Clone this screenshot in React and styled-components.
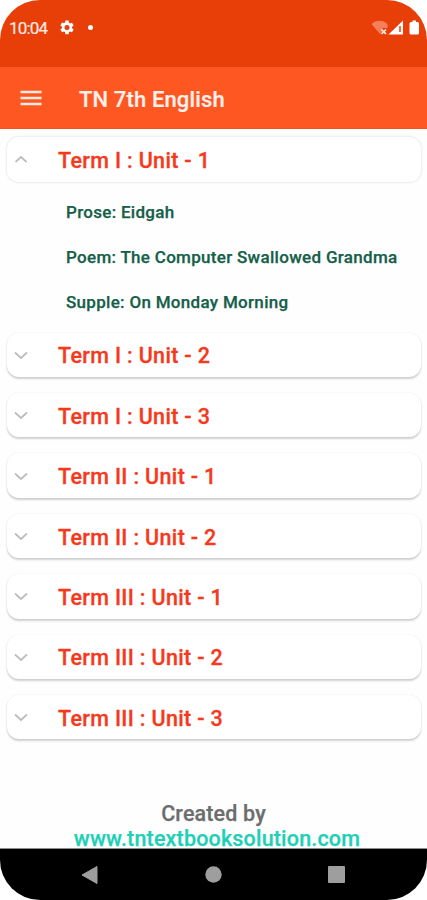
import React, { useState } from 'react';
import styled, { createGlobalStyle } from 'styled-components';

const GlobalStyle = createGlobalStyle`
  * { box-sizing: border-box; }
  body { margin: 0; background: #fff; }
`;

const Phone = styled.div`
  width: 427px;
  height: 900px;
  display: flex;
  flex-direction: column;
  overflow: hidden;
  border-radius: 40px;
  background: #fefefe;
  font-family: Roboto, sans-serif;
  font-weight: 500;
`;

const StatusBar = styled.header`
  height: 67px;
  flex: none;
  display: flex;
  align-items: flex-start;
  justify-content: space-between;
  padding: 17px 7px 0 9px;
  background: #e83e08;
  color: #ffeae2;
`;

const StatusGroup = styled.div`
  display: flex;
  align-items: center;
  height: 21px;
`;

const Clock = styled.span`
  width: 51px;
  padding-top: 2px;
  font-size: 17px;
  font-weight: 400;
  letter-spacing: -0.8px;
  line-height: 21px;
  -webkit-text-stroke: 0.2px;
`;

const Dot = styled.i`
  width: 5px;
  height: 5px;
  margin-left: 14px;
  border-radius: 50%;
  background: #fff;
`;

const AppBar = styled.div`
  height: 62px;
  flex: none;
  display: flex;
  align-items: center;
  padding: 0 20px;
  background: #ff5722;
  border-bottom: 1px solid #f4511e;
`;

const MenuButton = styled.button`
  display: flex;
  width: 22px;
  padding: 0;
  border: 0;
  background: none;
`;

const Title = styled.h1`
  margin: 5px 0 0 37px;
  font-size: 22px;
  font-weight: 500;
  line-height: 26px;
  letter-spacing: 0.13px;
  -webkit-text-stroke: 0.2px;
  color: #fff1eb;
`;

const List = styled.main`
  flex: 1;
  padding: 8.4px 6px 0 7px;
`;

const Section = styled.section`
  margin-bottom: 15.9px;
`;

const Card = styled.button`
  display: flex;
  align-items: center;
  width: 100%;
  height: 44.5px;
  padding: 0 0 0 7px;
  border: 0;
  border-radius: 12px;
  background: #fff;
  text-align: left;
  font: inherit;
  box-shadow: ${({ $open }) =>
    $open
      ? '0 0 2px 1px rgba(0, 0, 0, 0.08)'
      : '0 1.5px 2px rgba(0, 0, 0, 0.18), 0 0 2px rgba(0, 0, 0, 0.05)'};
`;

const CardLabel = styled.span`
  margin-left: 30px;
  padding-top: 2px;
  font-size: 21.5px;
  line-height: 25px;
  letter-spacing: 0.33px;
  -webkit-text-stroke: 0.3px;
  color: #f5391c;
`;

const Lessons = styled.ul`
  margin: 0 0 -15.9px;
  padding: 8.6px 0 7.1px 59px;
  list-style: none;
`;

const Lesson = styled.li`
  height: 45px;
  font-size: 17px;
  line-height: 45px;
  letter-spacing: 0.3px;
  -webkit-text-stroke: 0.25px;
  white-space: nowrap;
  color: #165f49;
`;

const Footer = styled.footer`
  flex: none;
  height: 49px;
  display: flex;
  flex-direction: column;
  align-items: center;
  padding-top: 1px;
  border-bottom: 1px solid #8b918f;
  white-space: nowrap;
`;

const Credit = styled.span`
  font-size: 21.5px;
  line-height: 25px;
  letter-spacing: 0.15px;
  -webkit-text-stroke: 0.25px;
  color: #6d6d6d;
`;

const SiteLink = styled.a`
  font-size: 21.5px;
  line-height: 25px;
  letter-spacing: 0.18px;
  margin-left: 7px;
  -webkit-text-stroke: 0.25px;
  color: #1fd0b7;
`;

const NavBar = styled.nav`
  flex: none;
  height: 51px;
  display: flex;
  justify-content: space-between;
  align-items: center;
  padding: 0 82px 0 80px;
  background: #000;
`;

const GearIcon = () => (
  <svg width="14" height="15" viewBox="2 2 20 20" fill="#fff">
    <path d="M19.14 12.94c.04-.3.06-.61.06-.94s-.02-.64-.07-.94l2.03-1.58a.5.5 0 0 0 .12-.61l-1.92-3.32a.49.49 0 0 0-.59-.22l-2.39.96c-.5-.38-1.03-.7-1.62-.94l-.36-2.54A.48.48 0 0 0 13.92 2h-3.84c-.24 0-.43.17-.47.41l-.36 2.54c-.59.24-1.13.57-1.62.94l-2.39-.96a.48.48 0 0 0-.59.22L2.74 8.87c-.12.21-.08.47.12.61l2.03 1.58c-.05.3-.09.63-.09.94s.02.64.07.94l-2.03 1.58a.5.5 0 0 0-.12.61l1.92 3.32c.12.22.37.29.59.22l2.39-.96c.5.38 1.03.7 1.62.94l.36 2.54c.05.24.24.41.48.41h3.84c.24 0 .44-.17.47-.41l.36-2.54c.59-.24 1.13-.56 1.62-.94l2.39.96c.22.08.47 0 .59-.22l1.92-3.32a.5.5 0 0 0-.12-.61zM12 15.6a3.6 3.6 0 1 1 0-7.2 3.6 3.6 0 0 1 0 7.2z" />
  </svg>
);

const SignalIcons = () => (
  <svg width="50" height="17" viewBox="0 0 50 17">
    <path d="M1.500 5C5 .5 14 .5 17.500 5v4h-5v3L10 15Z" fill="#f47f58" />
    <path d="M11.500 10.500 16 15M16 10.500 11.500 15" stroke="#fff0e9" strokeWidth="1.700" />
    <path d="M18.500 15.500 33 1.500v14Z" fill="#fff" />
    <path d="M30 7v6" stroke="#e83e08" strokeWidth="1.500" />
    <path d="M39.500 4.500q0-1.500 1.500-1.500h1.500V1.500h3.500V3H47.500q1.500 0 1.500 1.500v9.500q0 1.500-1.500 1.500h-6.500q-1.500 0-1.500-1.500Z" fill="#fff" />
  </svg>
);

const MenuIcon = () => (
  <svg width="22" height="16" viewBox="0 0 22 16">
    <path d="M.5 2h21M.5 8h21M.5 14h21" stroke="#ffebe3" strokeWidth="2.300" />
  </svg>
);

const Chevron = ({ up }) => (
  <svg width="14" height="10" viewBox="0 0 14 10" fill="none" stroke="#bcbcbc" strokeWidth="1.700">
    <path d={up ? 'M1.500 7 7 2l5.500 5' : 'M1 2.500 7 8l6-5.500'} />
  </svg>
);

const BackIcon = () => (
  <svg width="18" height="20" viewBox="0 0 18 20">
    <path d="M2 10 17 1.500v17Z" fill="#9e9e9e" stroke="#9e9e9e" strokeLinejoin="round" />
  </svg>
);

const HomeIcon = () => (
  <svg width="17" height="17" viewBox="0 0 17 17">
    <circle cx="8.500" cy="8.500" r="8.200" fill="#9e9e9e" />
  </svg>
);

const RecentsIcon = () => (
  <svg width="17" height="17" viewBox="0 0 17 17">
    <rect width="17" height="17" rx="1" fill="#9e9e9e" />
  </svg>
);

const units = [
  {
    name: 'Term I : Unit - 1',
    lessons: [
      'Prose: Eidgah',
      'Poem: The Computer Swallowed Grandma',
      'Supple: On Monday Morning',
    ],
  },
  { name: 'Term I : Unit - 2' },
  { name: 'Term I : Unit - 3' },
  { name: 'Term II : Unit - 1' },
  { name: 'Term II : Unit - 2' },
  { name: 'Term III : Unit - 1' },
  { name: 'Term III : Unit - 2' },
  { name: 'Term III : Unit - 3' },
];

export default function App() {
  const [openUnit, setOpenUnit] = useState(0);
  return (
    <>
      <GlobalStyle />
      <Phone>
        <StatusBar>
          <StatusGroup>
            <Clock>10:04</Clock>
            <GearIcon />
            <Dot />
          </StatusGroup>
          <StatusGroup>
            <SignalIcons />
          </StatusGroup>
        </StatusBar>
        <AppBar>
          <MenuButton aria-label="Menu"><MenuIcon /></MenuButton>
          <Title>TN 7th English</Title>
        </AppBar>
        <List>
          {units.map((unit, i) => {
            const open = i === openUnit;
            return (
              <Section key={unit.name}>
                <Card $open={open} aria-expanded={open} onClick={() => setOpenUnit(open ? -1 : i)}>
                  <Chevron up={open} />
                  <CardLabel>{unit.name}</CardLabel>
                </Card>
                {open && unit.lessons && (
                  <Lessons>
                    {unit.lessons.map((lesson) => <Lesson key={lesson}>{lesson}</Lesson>)}
                  </Lessons>
                )}
              </Section>
            );
          })}
        </List>
        <Footer>
          <Credit>Created by</Credit>
          <SiteLink>www.tntextbooksolution.com</SiteLink>
        </Footer>
        <NavBar>
          <BackIcon />
          <HomeIcon />
          <RecentsIcon />
        </NavBar>
      </Phone>
    </>
  );
}
